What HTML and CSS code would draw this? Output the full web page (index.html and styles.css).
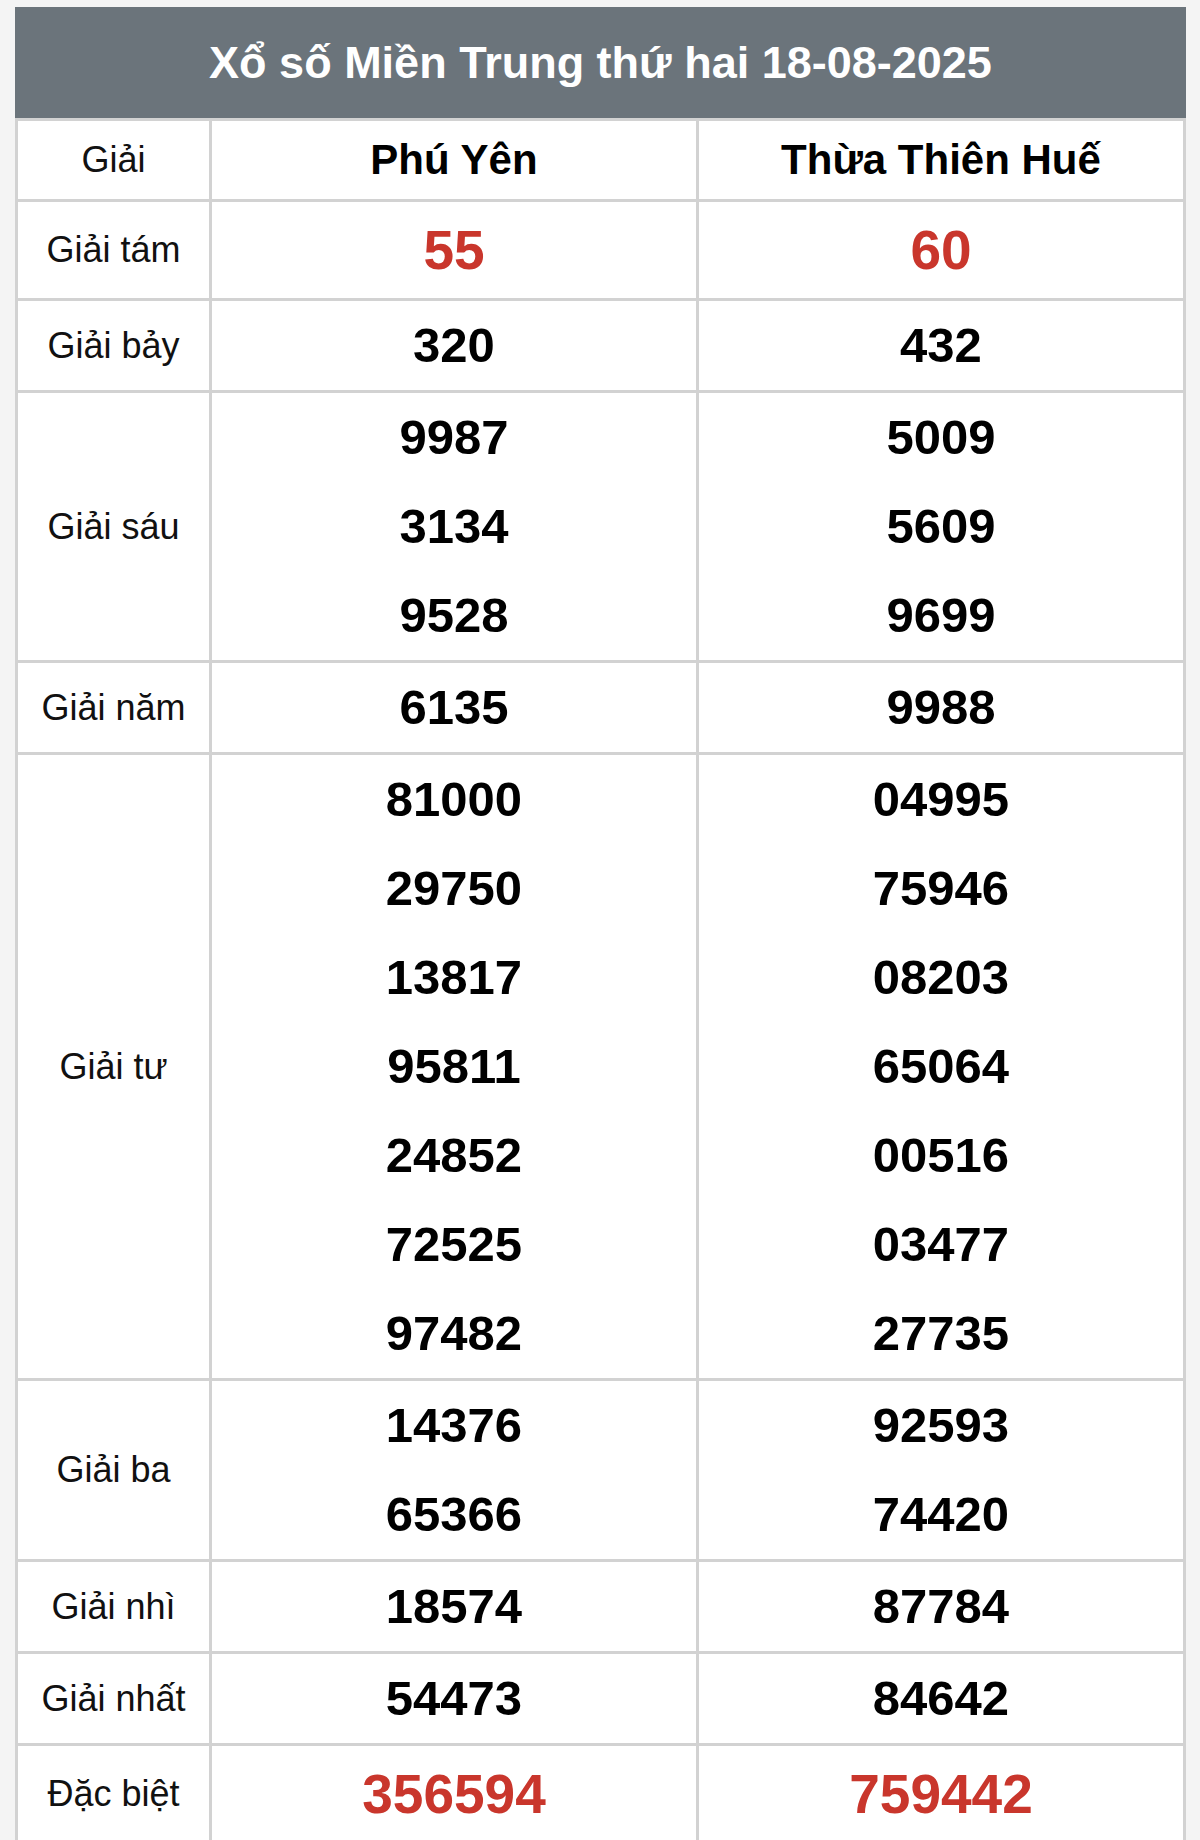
FILE: index.html
```html
<!DOCTYPE html>
<html lang="vi">
<head>
<meta charset="utf-8">
<title>Xổ số Miền Trung thứ hai 18-08-2025</title>
<link rel="stylesheet" href="styles.css">
</head>
<body>
<div class="board">
  <div class="title">Xổ số Miền Trung thứ hai 18-08-2025</div>
  <table class="results">
    <colgroup>
      <col class="c-label">
      <col class="c-prov">
      <col class="c-prov">
    </colgroup>
    <thead>
      <tr class="head">
        <td class="lbl">Giải</td>
        <th>Phú Yên</th>
        <th>Thừa Thiên Huế</th>
      </tr>
    </thead>
    <tbody>
      <tr class="big">
        <td class="lbl">Giải tám</td>
        <td><div class="n red">55</div></td>
        <td><div class="n red">60</div></td>
      </tr>
      <tr>
        <td class="lbl">Giải bảy</td>
        <td><div class="n">320</div></td>
        <td><div class="n">432</div></td>
      </tr>
      <tr>
        <td class="lbl">Giải sáu</td>
        <td><div class="n">9987</div><div class="n">3134</div><div class="n">9528</div></td>
        <td><div class="n">5009</div><div class="n">5609</div><div class="n">9699</div></td>
      </tr>
      <tr>
        <td class="lbl">Giải năm</td>
        <td><div class="n">6135</div></td>
        <td><div class="n">9988</div></td>
      </tr>
      <tr>
        <td class="lbl">Giải tư</td>
        <td><div class="n">81000</div><div class="n">29750</div><div class="n">13817</div><div class="n">95811</div><div class="n">24852</div><div class="n">72525</div><div class="n">97482</div></td>
        <td><div class="n">04995</div><div class="n">75946</div><div class="n">08203</div><div class="n">65064</div><div class="n">00516</div><div class="n">03477</div><div class="n">27735</div></td>
      </tr>
      <tr>
        <td class="lbl">Giải ba</td>
        <td><div class="n">14376</div><div class="n">65366</div></td>
        <td><div class="n">92593</div><div class="n">74420</div></td>
      </tr>
      <tr>
        <td class="lbl">Giải nhì</td>
        <td><div class="n">18574</div></td>
        <td><div class="n">87784</div></td>
      </tr>
      <tr>
        <td class="lbl">Giải nhất</td>
        <td><div class="n">54473</div></td>
        <td><div class="n">84642</div></td>
      </tr>
      <tr class="big">
        <td class="lbl">Đặc biệt</td>
        <td><div class="n red special">356594</div></td>
        <td><div class="n red special">759442</div></td>
      </tr>
    </tbody>
  </table>
</div>
</body>
</html>
```

FILE: styles.css
```css
html, body {
  margin: 0;
  padding: 0;
  background: #f4f4f4;
}

body {
  font-family: "Liberation Sans", Arial, Helvetica, sans-serif;
  color: #000;
}

.board {
  width: 1171px;
  margin: 7px 0 0 15px;
}

.title {
  height: 111px;
  background: #6b747b;
  color: #ffffff;
  font-weight: bold;
  font-size: 45px;
  line-height: 111px;
  text-align: center;
}

.results {
  width: 1171px;
  table-layout: fixed;
  border-collapse: separate;
  border-spacing: 0;
  border-left: 3px solid #d2d2d2;
  border-top: 3px solid #d2d2d2;
  background: #ffffff;
}

.c-label { width: 194px; }
.c-prov { width: 487px; }

.results td,
.results th {
  padding: 0;
  border-right: 3px solid #d2d2d2;
  border-bottom: 3px solid #d2d2d2;
  text-align: center;
  vertical-align: middle;
}

.head td,
.head th {
  height: 78px;
}

.head th {
  font-size: 42px;
  font-weight: bold;
  color: #000;
}

.lbl {
  font-size: 36px;
  font-weight: normal;
  color: #111;
}

.n {
  font-size: 49px;
  font-weight: bold;
  line-height: 89px;
  color: #000;
}

.big .n {
  line-height: 96px;
}

.red {
  color: #c9362c;
  font-size: 55px;
}
```
